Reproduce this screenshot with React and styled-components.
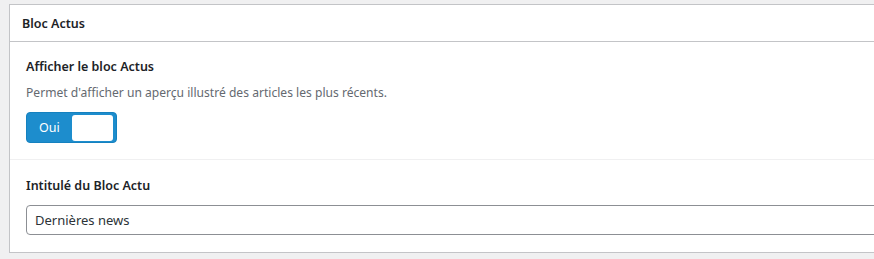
import React from 'react'
import styled, { createGlobalStyle } from 'styled-components'

const GlobalStyle = createGlobalStyle`
  html, body {
    margin: 0;
    padding: 0;
    background: #f0f0f1;
    overflow: hidden;
  }
  body {
    font-family: "Noto Sans", "Open Sans", Arial, sans-serif;
    font-size: 13px;
    color: #1d2327;
  }
`

const Page = styled.div`
  padding: 4px 0 8px 9px;
  width: 874px;
  box-sizing: border-box;
`

const Panel = styled.section`
  background: #fff;
  border: 1px solid #c3c4c7;
  border-right: none;
  margin-right: -40px;
`

const PanelHeader = styled.h2`
  margin: 0;
  height: 36px;
  display: flex;
  align-items: center;
  padding: 0 12px;
  border-bottom: 1px solid #c3c4c7;
  font-size: 12.5px;
  font-weight: 600;
  color: #1d2327;
`

const Field = styled.div`
  padding: ${p => (p.$separated ? '17px 16px 17px' : '16px')};
  border-top: ${p => (p.$separated ? '1px solid #f0f0f1' : 'none')};
`

const Label = styled.div`
  font-size: 12.5px;
  font-weight: 600;
  line-height: 18px;
  color: #1d2327;
  margin-bottom: ${p => p.$gap}px;
`

const Description = styled.p`
  margin: 0 0 10px;
  font-size: 12.1px;
  line-height: 18px;
  color: #646970;
`

const Toggle = styled.button`
  display: flex;
  align-items: center;
  justify-content: space-between;
  width: 91px;
  height: 31px;
  padding: 0 3px 0 12px;
  box-sizing: border-box;
  background: #1d8dcd;
  border: 1px solid #1581bf;
  border-radius: 4px;
  cursor: pointer;
  font-family: inherit;
`

const ToggleText = styled.span`
  color: #fff;
  font-size: 12.5px;
`

const Knob = styled.span`
  width: 41px;
  height: 26px;
  background: #fff;
  border-radius: 3px;
`

const TextInput = styled.input`
  display: block;
  width: 100%;
  height: 30px;
  box-sizing: border-box;
  border: 1px solid #8c8f94;
  border-radius: 4px;
  padding: 0 8px;
  font-family: inherit;
  font-size: 13px;
  color: #2c3338;
  background: #fff;
  outline: none;
`

export default function App() {
  return (
    <>
      <GlobalStyle />
      <Page>
        <Panel>
          <PanelHeader>Bloc Actus</PanelHeader>
          <Field>
            <Label $gap={8}>Afficher le bloc Actus</Label>
            <Description>
              Permet d'afficher un aperçu illustré des articles les plus récents.
            </Description>
            <Toggle type="button">
              <ToggleText>Oui</ToggleText>
              <Knob />
            </Toggle>
          </Field>
          <Field $separated>
            <Label $gap={10}>Intitulé du Bloc Actu</Label>
            <TextInput defaultValue="Dernières news" />
          </Field>
        </Panel>
      </Page>
    </>
  )
}
